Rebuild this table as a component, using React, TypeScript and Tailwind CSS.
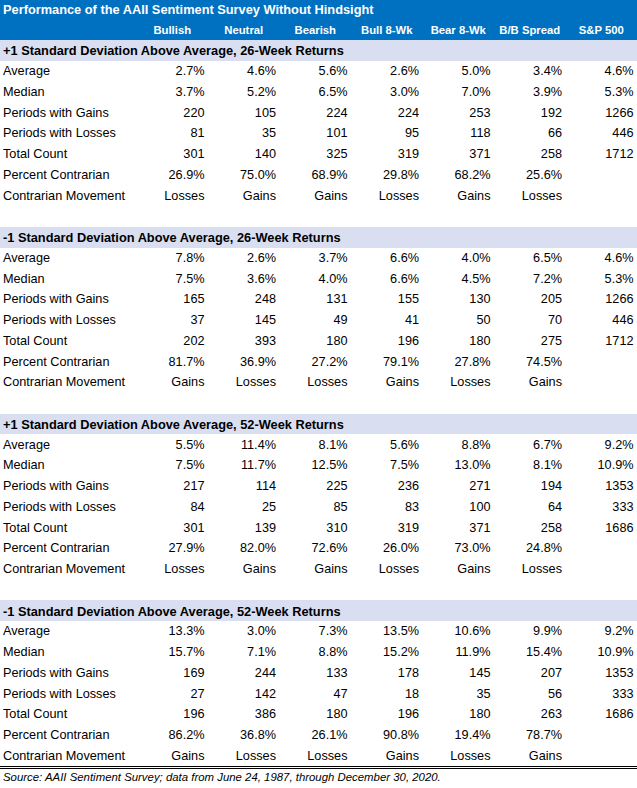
const columns = ["Bullish", "Neutral", "Bearish", "Bull 8-Wk", "Bear 8-Wk", "B/B Spread", "S&P 500"]

const labels = [
  "Average",
  "Median",
  "Periods with Gains",
  "Periods with Losses",
  "Total Count",
  "Percent Contrarian",
  "Contrarian Movement",
]

const sections = [
  {
    title: "+1 Standard Deviation Above Average, 26-Week Returns",
    rows: [
      ["2.7%", "4.6%", "5.6%", "2.6%", "5.0%", "3.4%", "4.6%"],
      ["3.7%", "5.2%", "6.5%", "3.0%", "7.0%", "3.9%", "5.3%"],
      ["220", "105", "224", "224", "253", "192", "1266"],
      ["81", "35", "101", "95", "118", "66", "446"],
      ["301", "140", "325", "319", "371", "258", "1712"],
      ["26.9%", "75.0%", "68.9%", "29.8%", "68.2%", "25.6%", ""],
      ["Losses", "Gains", "Gains", "Losses", "Gains", "Losses", ""],
    ],
  },
  {
    title: "-1 Standard Deviation Above Average, 26-Week Returns",
    rows: [
      ["7.8%", "2.6%", "3.7%", "6.6%", "4.0%", "6.5%", "4.6%"],
      ["7.5%", "3.6%", "4.0%", "6.6%", "4.5%", "7.2%", "5.3%"],
      ["165", "248", "131", "155", "130", "205", "1266"],
      ["37", "145", "49", "41", "50", "70", "446"],
      ["202", "393", "180", "196", "180", "275", "1712"],
      ["81.7%", "36.9%", "27.2%", "79.1%", "27.8%", "74.5%", ""],
      ["Gains", "Losses", "Losses", "Gains", "Losses", "Gains", ""],
    ],
  },
  {
    title: "+1 Standard Deviation Above Average, 52-Week Returns",
    rows: [
      ["5.5%", "11.4%", "8.1%", "5.6%", "8.8%", "6.7%", "9.2%"],
      ["7.5%", "11.7%", "12.5%", "7.5%", "13.0%", "8.1%", "10.9%"],
      ["217", "114", "225", "236", "271", "194", "1353"],
      ["84", "25", "85", "83", "100", "64", "333"],
      ["301", "139", "310", "319", "371", "258", "1686"],
      ["27.9%", "82.0%", "72.6%", "26.0%", "73.0%", "24.8%", ""],
      ["Losses", "Gains", "Gains", "Losses", "Gains", "Losses", ""],
    ],
  },
  {
    title: "-1 Standard Deviation Above Average, 52-Week Returns",
    rows: [
      ["13.3%", "3.0%", "7.3%", "13.5%", "10.6%", "9.9%", "9.2%"],
      ["15.7%", "7.1%", "8.8%", "15.2%", "11.9%", "15.4%", "10.9%"],
      ["169", "244", "133", "178", "145", "207", "1353"],
      ["27", "142", "47", "18", "35", "56", "333"],
      ["196", "386", "180", "196", "180", "263", "1686"],
      ["86.2%", "36.8%", "26.1%", "90.8%", "19.4%", "78.7%", ""],
      ["Gains", "Losses", "Losses", "Gains", "Losses", "Gains", ""],
    ],
  },
]

const grid = "grid grid-cols-[133px_repeat(7,71.5px)_1fr]"

export default function App() {
  return (
    <div className="w-[637px] h-[788px] bg-white text-black font-['Liberation_Sans',Arial,sans-serif] overflow-hidden">
      {/* Blue header */}
      <div className="bg-[#0070C0] text-white font-bold">
        <div className="h-[20px] flex items-center pl-[3px] text-[12.8px]">
          Performance of the AAII Sentiment Survey Without Hindsight
        </div>
        <div className={`${grid} h-[20px] items-center text-[11.3px]`}>
          <div />
          {columns.map((c) => (
            <div key={c} className="text-center pl-[7px] whitespace-nowrap">
              {c}
            </div>
          ))}
        </div>
      </div>

      <div className="border-b-[3px] border-double border-black">
        {sections.map((s, si) => (
          <div key={s.title}>
            <div className="h-[20.75px] bg-[#D9DFF0] flex items-center pl-[3px] pt-[1px] font-bold text-[12.8px]">
              {s.title}
            </div>
            {s.rows.map((r, ri) => (
              <div key={ri} className={`${grid} h-[20.75px] items-center pt-[1px] text-[12.7px]`}>
                <div className="pl-[3px] whitespace-nowrap">{labels[ri]}</div>
                {r.map((v, ci) => (
                  <div key={ci} className="text-right">
                    {v}
                  </div>
                ))}
              </div>
            ))}
            {si < sections.length - 1 && <div className="h-[20.75px]" />}
          </div>
        ))}
      </div>

      <div className="h-[17px] flex items-center pl-[3px] italic text-[11.4px]">
        Source: AAII Sentiment Survey; data from June 24, 1987, through December 30, 2020.
      </div>
    </div>
  )
}
